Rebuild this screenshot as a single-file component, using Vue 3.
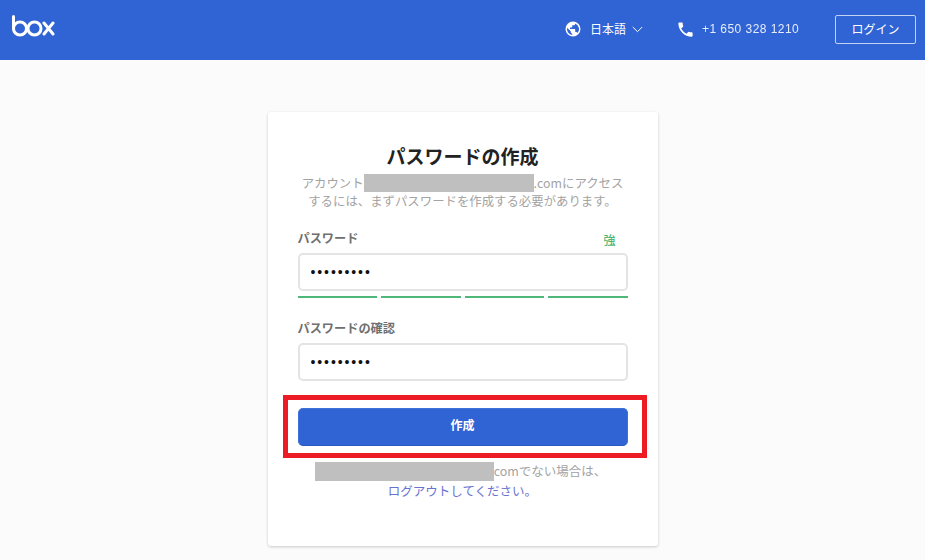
<template>
  <div class="page">
    <header class="topbar">
      <svg class="logo" width="44" height="24" viewBox="0 0 44 24" fill="none" stroke="#fff" stroke-width="3" stroke-linecap="round">
        <path d="M2.500 2.500v12" />
        <circle cx="9" cy="14.500" r="6.500" />
        <circle cx="23.500" cy="14.500" r="6.500" />
        <path d="M33 9l9 11M42 9l-9 11" />
      </svg>
      <div class="topbar-right">
        <div class="lang">
          <svg width="18" height="18" viewBox="0 0 24 24" fill="#fff">
            <path d="M12 2a10 10 0 1 0 0 20 10 10 0 0 0 0-20zm-1 17.900A8 8 0 0 1 4.200 10.200L9 15v1c0 1.100.9 2 2 2v1.900zm6.900-2.500A2 2 0 0 0 16 16h-1v-3c0-.6-.4-1-1-1H8v-2h2c.6 0 1-.4 1-1V7h2c1.100 0 2-.9 2-2v-.4a8 8 0 0 1 2.900 12.800z" />
          </svg>
          <span class="lang-name">日本語</span>
          <svg width="11" height="7" viewBox="0 0 11 7" fill="none" stroke="#fff" stroke-width="1">
            <path d="M.8 1l4.700 4.700L10.200 1" />
          </svg>
        </div>
        <div class="phone">
          <svg width="19" height="19" viewBox="0 0 24 24" fill="#fff">
            <path d="M6.600 10.800c1.400 2.800 3.800 5.100 6.600 6.600l2.200-2.200c.3-.3.7-.4 1-.2 1.100.4 2.300.6 3.600.6.600 0 1 .4 1 1V20c0 .6-.4 1-1 1C10.600 21 3 13.400 3 4c0-.6.4-1 1-1h3.500c.6 0 1 .4 1 1 0 1.300.2 2.500.6 3.600.1.300 0 .7-.2 1l-2.300 2.200z" />
          </svg>
          <span class="phone-number">+1 650 328 1210</span>
        </div>
        <button class="login">ログイン</button>
      </div>
    </header>

    <main class="content">
      <div class="card">
        <h1>パスワードの作成</h1>
        <p class="intro">
          アカウント<span class="redact redact-top"></span>.comにアクセス<br />するには、まずパスワードを作成する必要があります。
        </p>

        <div class="label-row">
          <label>パスワード</label>
          <span class="strength">強</span>
        </div>
        <input class="field" type="password" value="password1" readonly />
        <div class="meter">
          <span v-for="n in 4" :key="n"></span>
        </div>

        <label class="label-second">パスワードの確認</label>
        <input class="field" type="password" value="password1" readonly />

        <button class="submit">作成</button>

        <p class="foot">
          <span class="redact redact-bottom"></span>comでない場合は、<br /><a href="#">ログアウトしてください。</a>
        </p>
      </div>
    </main>

    <!-- 赤枠の注釈 -->
    <div class="highlight"></div>
  </div>
</template>

<script setup>
</script>

<style>
html,
body {
  margin: 0;
  background: #fbfbfb;
}
</style>

<style scoped>
.page {
  position: relative;
  height: 560px;
  overflow: hidden;
  background: #fbfbfb;
  font-family: "Noto Sans CJK JP", "Liberation Sans", sans-serif;
}

.topbar {
  height: 60px;
  box-sizing: border-box;
  padding: 0 9px 0 11px;
  display: flex;
  align-items: center;
  justify-content: space-between;
  background: #3063d3;
  color: #fff;
}

.logo {
  margin-bottom: 8px;
}

.topbar-right {
  display: flex;
  align-items: center;
  margin-bottom: 2px;
}

.lang {
  display: flex;
  align-items: center;
  margin-right: 33px;
}

.lang-name {
  margin: 0 6px 0 8px;
  padding-bottom: 2px;
  font-size: 12px;
}

.phone {
  display: flex;
  align-items: center;
  gap: 7px;
  margin-right: 36px;
}

.phone-number {
  width: 97px;
  font-family: "Liberation Sans", sans-serif;
  font-size: 12px;
  letter-spacing: 0.45px;
  white-space: nowrap;
  color: #e6ecfa;
  filter: blur(0.6px);
}

.login {
  width: 81px;
  height: 29px;
  padding: 0 0 2px;
  background: transparent;
  border: 1px solid #c3d2f2;
  border-radius: 2px;
  color: #fff;
  font-family: inherit;
  font-size: 12px;
}

.content {
  display: flex;
  justify-content: center;
  padding-top: 52px;
}

.card {
  width: 390px;
  height: 434px;
  box-sizing: border-box;
  padding: 29px 30px 0;
  background: #fff;
  border-radius: 3px;
  box-shadow: 0 1px 3px rgba(0, 0, 0, 0.2);
}

h1 {
  margin: 0;
  height: 30px;
  line-height: 30px;
  font-size: 19px;
  font-weight: 700;
  text-align: center;
  color: #222;
}

.intro {
  margin: 3px 0 0;
  font-size: 12.4px;
  line-height: 18px;
  text-align: center;
  color: #a3a3a3;
  white-space: nowrap;
}

.redact {
  display: inline-block;
  background: #bfbfbf;
}

.redact-top {
  width: 170px;
  height: 18px;
  vertical-align: -4px;
}

.redact-bottom {
  width: 179px;
  height: 19px;
  margin-left: -4px;
  vertical-align: -5px;
}

.label-row {
  display: flex;
  justify-content: space-between;
  margin-top: 19px;
  height: 24px;
}

label {
  font-size: 12.2px;
  font-weight: 700;
  color: #6f6f6f;
  line-height: 18px;
}

.strength {
  font-size: 12px;
  font-weight: 500;
  line-height: 22px;
  color: #4fb878;
  margin-right: 12px;
}

.field {
  display: block;
  width: 100%;
  height: 38px;
  box-sizing: border-box;
  padding: 0 11px;
  background: #fff;
  border: 2px solid #e4e4e4;
  border-radius: 5px;
  outline: none;
  color: #111;
  font-family: "Liberation Sans", sans-serif;
  font-size: 14px;
  letter-spacing: 1.9px;
}

.meter {
  display: grid;
  grid-template-columns: repeat(4, 1fr);
  gap: 4px;
  margin-top: 5px;
}

.meter span {
  height: 2px;
  background: #4fb878;
}

.label-second {
  display: block;
  margin-top: 20px;
  height: 25px;
  line-height: 20px;
}

.submit {
  display: block;
  width: 100%;
  height: 38px;
  margin-top: 27px;
  padding: 0 0 5px;
  background: #3063d3;
  border: 1px solid #3f70d8;
  border-bottom-color: #2a58c0;
  border-radius: 5px;
  color: #fff;
  font-family: inherit;
  font-size: 12px;
  font-weight: 700;
}

.foot {
  margin: 15px 0 0;
  font-size: 12.5px;
  line-height: 19px;
  text-align: center;
  color: #a3a3a3;
  white-space: nowrap;
}

.foot a {
  color: #6a72d0;
  text-decoration: none;
}

.highlight {
  position: absolute;
  left: 283px;
  top: 395px;
  width: 364px;
  height: 63px;
  box-sizing: border-box;
  border: 5px solid #ed1c24;
  pointer-events: none;
}
</style>
